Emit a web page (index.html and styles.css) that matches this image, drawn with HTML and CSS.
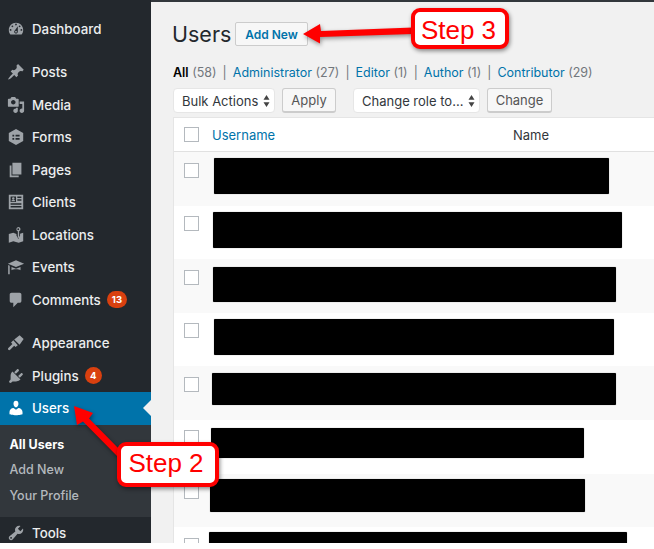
FILE: index.html
```html
<!DOCTYPE html>
<html lang="en">
<head>
<meta charset="utf-8">
<title>Users</title>
<link rel="stylesheet" href="styles.css">
</head>
<body>
<div class="shell">
  <nav class="side">
    <a class="item first"><svg class="ic" viewBox="0 0 20 20"><path d="M3.76 16h12.48c1.1-1.37 1.76-3.11 1.76-5 0-4.42-3.58-8-8-8s-8 3.58-8 8c0 1.89.66 3.63 1.76 5zM10 4c.55 0 1 .45 1 1s-.45 1-1 1-1-.45-1-1 .45-1 1-1zM6 6c.55 0 1 .45 1 1s-.45 1-1 1-1-.45-1-1 .45-1 1-1zm8 0c.55 0 1 .45 1 1s-.45 1-1 1-1-.45-1-1 .45-1 1-1zm-5.37 5.55L12 7v6c0 1.1-.9 2-2 2s-2-.9-2-2c0-.57.24-1.08.63-1.45zM4 10c.55 0 1 .45 1 1s-.45 1-1 1-1-.45-1-1 .45-1 1-1zm12 0c.55 0 1 .45 1 1s-.45 1-1 1-1-.45-1-1 .45-1 1-1zm-5 3c0-.55-.45-1-1-1s-1 .45-1 1 .45 1 1 1 1-.45 1-1z" fill-rule="evenodd"/></svg>Dashboard</a>
    <div class="group">
      <a class="item"><svg class="ic" viewBox="0 0 20 20"><path d="M10.44 3.02l1.82-1.82 6.36 6.35-1.83 1.82c-1.05-.68-2.48-.57-3.41.36l-.75.75c-.92.93-1.04 2.35-.35 3.41l-1.83 1.82-2.41-2.41-2.8 2.79c-.42.42-3.38 2.71-3.8 2.29s1.86-3.39 2.28-3.81l2.79-2.79L4.1 9.36l1.83-1.82c1.05.69 2.48.57 3.4-.36l.75-.75c.93-.92 1.05-2.35.36-3.41z"/></svg>Posts</a>
      <a class="item"><svg class="ic" viewBox="0 0 20 20"><path fill-rule="evenodd" d="M13 11V4c0-.55-.45-1-1-1h-1.67L9 1H5L3.67 3H2c-.55 0-1 .45-1 1v7c0 .55.45 1 1 1h10c.55 0 1-.45 1-1zM7 4.500c1.38 0 2.500 1.120 2.500 2.500S8.380 9.500 7 9.500 4.500 8.380 4.500 7 5.620 4.500 7 4.500zM14 6h5v10.500c0 1.380-1.120 2.500-2.500 2.500S14 17.880 14 16.500s1.120-2.500 2.500-2.500c.17 0 .34.02.5.05V9h-3V6zm-4 8.050V13h2v3.500c0 1.380-1.120 2.500-2.500 2.500S7 17.880 7 16.500 8.120 14 9.500 14c.17 0 .34.02.5.05z"/></svg>Media</a>
      <a class="item"><svg class="ic" viewBox="0 0 20 20"><path fill-rule="evenodd" d="M10 1l8 4.500v9L10 19l-8-4.500v-9zM6 7.500v2h2v-2zm3.500 0v2H14v-2zM6 11v2h2v-2zm3.500 0v2H14v-2z"/></svg>Forms</a>
      <a class="item"><svg class="ic" viewBox="0 0 20 20"><path d="M6 15V2h10v13H6zm-1 1h8v2H3V5h2v11z"/></svg>Pages</a>
      <a class="item"><svg class="ic" viewBox="0 0 20 20"><path fill-rule="evenodd" d="M2 2h16v16H2zM4 4v6h6V4zm7.500 0v1.500H16V4zm0 3v1.500H16V7zM4 11.500V13h12v-1.500zM4 14.500V16h12v-1.500zM7 4.800a1.400 1.400 0 1 1 0 2.800 1.400 1.400 0 0 1 0-2.800zM4.800 9.300c0-1 1-1.500 2.200-1.500s2.200.5 2.200 1.500z"/></svg>Clients</a>
      <a class="item"><svg class="ic" viewBox="0 0 20 20"><path fill-rule="evenodd" d="M12.500 1a2.500 2.500 0 0 1 1 4.800V13h-1.500V5.800A2.500 2.500 0 0 1 12.500 1zM12.500 2.500a1 1 0 1 0 0 2 1 1 0 0 0 0-2zM2 9l5-1.500 3.500 1.500v1.500l2 4 2-4V8.500L18 7.500V17l-5 1.500-6-1.500-5 1.500z"/></svg>Locations</a>
      <a class="item"><svg class="ic" viewBox="0 0 20 20"><path d="M10 2.500L1 6.500l9 3.500 9-3.500zM5 10v3.500c2-1.500 8-1.500 10 0V10l-5 2zM1.300 7.800V18H3V8.500z"/></svg>Events</a>
      <a class="item"><svg class="ic" viewBox="0 0 20 20"><path d="M5 2h9c1.100 0 2 .9 2 2v7c0 1.100-.9 2-2 2h-2l-5 5v-5H5c-1.100 0-2-.9-2-2V4c0-1.100.9-2 2-2z"/></svg>Comments<span class="badge">13</span></a>
    </div>
    <div class="group">
      <a class="item"><svg class="ic" viewBox="0 0 20 20"><path d="M18.500 5.500L14 1.500 8 6l6 6zM7 7l-2.500 2.500 1.500 1.500-4.500 4.500c-.6.600-.6 1.400 0 2s1.400.6 2 0L8 13l1.500 1.500L12 12.500z"/></svg>Appearance</a>
      <a class="item"><svg class="ic" viewBox="0 0 20 20"><path d="M13.110 4.360L9.870 7.600 8 5.730l3.240-3.240c.35-.34 1.050-.2 1.560.32.52.51.66 1.210.31 1.550zm-8 1.770l.91-1.120 9.010 9.010-1.190.84c-.71.71-2.630 1.160-3.820 1.160H6.140L4.900 17.260c-.59.59-1.540.59-2.120 0-.59-.58-.59-1.530 0-2.120l1.240-1.240v-3.880c0-1.130.4-3.190 1.090-3.890zm7.260 3.970l3.240-3.240c.34-.35 1.040-.21 1.550.31.52.51.66 1.210.31 1.550l-3.240 3.250z"/></svg>Plugins<span class="badge">4</span></a>
      <a class="item active"><svg class="ic" viewBox="0 0 20 20"><path d="M10 9.250c-2.270 0-2.730-3.440-2.730-3.440C7 4.020 7.820 2 9.970 2c2.160 0 2.980 2.020 2.710 3.810 0 0-.41 3.440-2.680 3.440zm0 2.570L12.720 10c2.390 0 4.520 2.330 4.520 4.530v2.490s-3.650 1.130-7.240 1.130c-3.650 0-7.240-1.130-7.240-1.130v-2.490c0-2.250 1.940-4.480 4.470-4.480z"/></svg>Users</a>
      <div class="sub">
        <a class="subitem current">All Users</a>
        <a class="subitem">Add New</a>
        <a class="subitem">Your Profile</a>
      </div>
      <a class="item"><svg class="ic" viewBox="0 0 20 20"><path fill-rule="evenodd" d="M16.680 9.770c-1.340 1.340-3.300 1.670-4.950.99l-5.410 6.520c-.99.99-2.590.99-3.580 0s-.99-2.590 0-3.570l6.520-5.420c-.68-1.650-.35-3.610.99-4.950 1.280-1.280 3.120-1.620 4.720-1.060l-2.890 2.890 2.820 2.820 2.860-2.870c.53 1.580.18 3.390-1.080 4.650zM3.810 16.210c.4.39 1.040.39 1.430 0 .4-.4.4-1.040 0-1.430-.39-.4-1.030-.4-1.430 0-.39.39-.39 1.030 0 1.430z"/></svg>Tools</a>
    </div>
  </nav>
  <main class="main">
    <header class="head">
      <h1 class="title">Users</h1>
      <a class="addnew">Add New</a>
    </header>
    <p class="filters"><b>All</b> <span class="n">(58)</span><i>|</i><a>Administrator</a> <span class="n">(27)</span><i>|</i><a>Editor</a> <span class="n">(1)</span><i>|</i><a>Author</a> <span class="n">(1)</span><i>|</i><a>Contributor</a> <span class="n">(29)</span></p>
    <div class="actions">
      <span class="select bulk">Bulk Actions<svg class="updown" viewBox="0 0 8 14"><path d="M4 0l3.500 5.500h-7zM4 14L.5 8.500h7z"/></svg></span>
      <span class="btn apply">Apply</span>
      <span class="select role">Change role to...<svg class="updown" viewBox="0 0 8 14"><path d="M4 0l3.500 5.500h-7zM4 14L.5 8.500h7z"/></svg></span>
      <span class="btn change">Change</span>
    </div>
    <section class="table">
      <div class="thead"><span class="cb"></span><a class="col-user">Username</a><span class="col-name">Name</span></div>
      <div class="row"><span class="cb"></span><div class="redact r1"></div></div>
      <div class="row"><span class="cb"></span><div class="redact r2"></div></div>
      <div class="row"><span class="cb"></span><div class="redact r3"></div></div>
      <div class="row"><span class="cb"></span><div class="redact r4"></div></div>
      <div class="row"><span class="cb"></span><div class="redact r5"></div></div>
      <div class="row"><span class="cb"></span><div class="redact r6"></div></div>
      <div class="row"><span class="cb"></span><div class="redact r7"></div></div>
      <div class="row"><span class="cb"></span><div class="redact r8"></div></div>
    </section>
  </main>
</div>
<svg class="arrows" viewBox="0 0 654 549" width="654" height="549">
  <g class="arrow">
    <path d="M413 27.500L321 31 320 24 303 34 320 43.500 320 37 413 34z"/>
    <path d="M122 452L89 418.500 93 413 74 406 77 425 83 421.500 117 456z"/>
  </g>
</svg>
<div class="step step3">Step 3</div>
<div class="step step2">Step 2</div>
</body>
</html>
```
FILE: styles.css
```css
* { box-sizing: border-box; }
html, body { margin: 0; height: 100%; overflow: hidden; background: #fff; }
body { position: relative; font-family: Inter, "Liberation Sans", sans-serif; font-size: 13px; color: #444; }
.shell { display: flex; height: 543px; overflow: hidden; background: #f1f1f1; }
.side { width: 151px; flex: none; background: #23282d; padding-top: 13px; color: #eee; }
.group { margin-top: 11px; }
.item { display: flex; align-items: center; height: 32.5px; padding-left: 7px; font-size: 13.3px; font-weight: 500; color: #eceeef; position: relative; }
.first { height: 32px; }
.ic { width: 18px; height: 18px; margin-right: 7px; fill: #9ea3a8; flex: none; }
.active { background: #0073aa; color: #fff; }
.active .ic { fill: #fff; }
.active::after { content: ""; position: absolute; right: 0; top: 8px; border: 8px solid transparent; border-right-color: #f1f1f1; border-left-width: 0; }
.badge { margin-left: 6px; min-width: 17px; height: 17px; padding: 0 5px; border-radius: 9px; background: #d9400f; color: #fff; font-size: 9.5px; font-weight: 700; display: flex; align-items: center; justify-content: center; }
.sub { background: #32373c; height: 92px; padding-top: 7px; }
.subitem { display: block; height: 25.7px; line-height: 25.7px; padding-left: 9.5px; font-size: 12.5px; color: #b4b9be; font-weight: 500; }
.current { color: #fff; font-weight: 700; }
.main { flex: 1; min-width: 0; border-top: 2px solid #32373c; padding: 0 0 0 22px; }
.head { display: flex; align-items: center; height: 44px; margin-top: 10px; margin-left: -1px; }
.title { margin: 0; width: 63px; font-size: 21.500px; font-weight: 400; color: #23282d; line-height: 46px; }
.addnew { height: 24px; width: 73px; display: flex; align-items: center; justify-content: center; background: #f7f7f7; border: 1px solid #ccc; border-radius: 2px; color: #0073aa; font-size: 12px; font-weight: 600; }
.filters { margin: 9px 0 0; height: 16px; line-height: 16px; font-size: 12.500px; white-space: nowrap; color: #555; }
.filters b { color: #000; font-weight: 600; }
.filters a { color: #0073aa; }
.filters .n { color: #72777c; }
.filters i { font-style: normal; color: #72777c; margin: 0 6px; }
.actions { display: flex; margin-top: 7px; height: 25px; }
.select { display: flex; align-items: center; justify-content: space-between; height: 25px; padding: 0 4px 0 8px; background: #fff; border-radius: 4px; border: 1px solid #e6e6e6; color: #32373c; font-size: 13px; }
.bulk { width: 102px; }
.role { width: 127px; margin-left: 17px; }
.updown { width: 7px; height: 12px; fill: #444; flex: none; }
.btn { display: flex; align-items: center; justify-content: center; height: 25px; margin-left: 7px; background: #f7f7f7; border: 1px solid #ccc; border-bottom-width: 2px; border-radius: 3px; color: #555; font-size: 13px; }
.apply { width: 54px; }
.change { width: 65px; }
.table { margin-top: 4px; background: #fff; border: 1px solid #e5e5e5; border-right: 0; border-bottom: 0; }
.thead { display: flex; align-items: center; height: 34px; border-bottom: 1px solid #e1e1e1; padding-left: 10px; position: relative; font-size: 13px; }
.col-user { margin-left: 13px; color: #0073aa; }
.col-name { position: absolute; left: 339px; color: #32373c; }
.cb { width: 15px; height: 15px; flex: none; background: #fff; border: 1px solid #b4b9be; }
.row { display: flex; align-items: flex-start; height: 53.6px; padding: 10.500px 0 0 10px; background: #fff; }
.row:nth-child(even) { background: #f9f9f9; }
.redact { background: #000; box-shadow: 0 0 1px #777; border-radius: 1px; }
.r1 { margin: -5px 0 0 15px; width: 395px; height: 36px; }
.r2 { margin: -4px 0 0 14px; width: 409px; height: 36px; }
.r3 { margin: -3px 0 0 14px; width: 403px; height: 35px; }
.r4 { margin: -4px 0 0 15px; width: 400px; height: 36px; }
.r5 { margin: -4px 0 0 13px; width: 404px; height: 32px; }
.r6 { margin: -2px 0 0 12px; width: 373px; height: 30px; }
.r7 { margin: -5px 0 0 11px; width: 375px; height: 33px; }
.r8 { margin: -6px 0 0 10px; width: 418px; height: 40px; }
.arrows { position: absolute; left: 0; top: 0; pointer-events: none; }
.arrow { fill: #f00; filter: drop-shadow(1px 2px 2px rgba(0,0,0,.4)); }
.step { position: absolute; display: flex; align-items: center; justify-content: center; background: #fff; border: 4px solid #f00; border-radius: 9px; box-shadow: 1px 2px 4px rgba(0,0,0,.45); color: #f00; font-family: "Liberation Sans", Arial, sans-serif; font-size: 26px; }
.step3 { left: 411px; top: 8px; width: 98px; height: 41px; padding: 3px 3px 0 0; }
.step2 { left: 117px; top: 442px; width: 102px; height: 45px; padding: 0 4px 3px 0; }
```
